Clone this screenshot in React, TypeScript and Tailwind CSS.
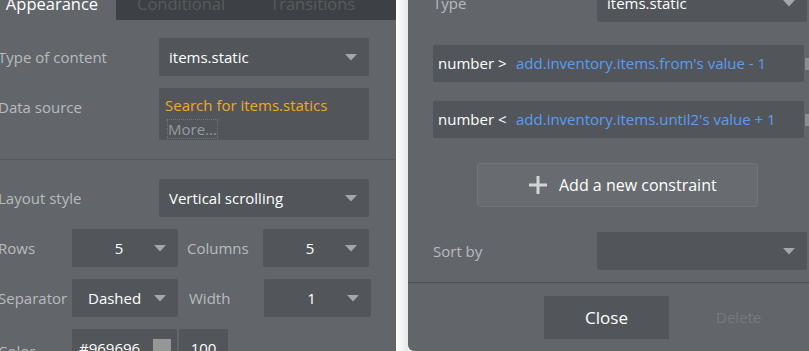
import React from 'react'

const Chevron = () => (
    <svg width="12" height="7" viewBox="0 0 12 7" className="shrink-0">
        <path d="M0 0 L12 0 L6 6.5 Z" fill="#a3a7ab" />
    </svg>
)

const Select = ({
    value,
    className,
    center,
}: {
    value: string
    className: string
    center?: boolean
}) => (
    <div
        className={`h-[38px] shrink-0 bg-[#52565a] rounded-[2px] flex items-center pr-3 ${className}`}
    >
        <span
            className={`text-[15px] text-white ${center ? 'flex-1 text-center pl-3' : 'flex-1 pl-[10px]'}`}
        >
            {value}
        </span>
        <Chevron />
    </div>
)

const Label = ({ text, className }: { text: string; className: string }) => (
    <span className={`text-[15px] text-[#b8bbbe] shrink-0 ${className}`}>{text}</span>
)

const Constraint = ({ op, expr }: { op: string; expr: string }) => (
    <div className="flex items-center">
        <div className="h-[37px] w-[372px] bg-[#52565a] rounded-[2px] flex items-center pl-[5px]">
            <span className="text-[15px] text-white w-[78px]">{op}</span>
            <span className="text-[15px] text-[#5b9cf2] whitespace-nowrap">{expr}</span>
        </div>
        <div className="ml-[1px] w-[4px] h-[12px] bg-[#8a8e92]" />
    </div>
)

export default function App() {
    return (
        <div className="w-[809px] h-[351px] bg-white flex overflow-hidden font-['Open_Sans',sans-serif]">
            {/* left: element property editor */}
            <div className="w-[396px] h-full bg-[#62666a] flex flex-col shrink-0 overflow-hidden">
                <div className="h-[20px] flex shrink-0 overflow-hidden">
                    <div className="w-[116px] flex justify-center">
                        <span className="text-[16.5px] leading-[24px] text-white -mt-[8px] -ml-[12px]">
                            Appearance
                        </span>
                    </div>
                    <div className="flex-1 bg-[#3d4145] flex">
                        <span className="text-[16.5px] leading-[24px] text-[#575b5f] -mt-[8px] ml-[21px]">
                            Conditional
                        </span>
                        <span className="text-[16.5px] leading-[24px] text-[#575b5f] -mt-[8px] ml-[45px]">
                            Transitions
                        </span>
                    </div>
                </div>

                <div className="flex flex-col shrink-0 pt-[18px] -ml-[2px]">
                    <div className="flex items-center">
                        <Label text="Type of content" className="w-[161px]" />
                        <Select value="items.static" className="w-[210px]" />
                    </div>

                    <div className="flex mt-[12px]">
                        <Label text="Data source" className="w-[161px] pt-[8px]" />
                        <div className="w-[210px] h-[52px] bg-[#52565a] rounded-[2px] flex flex-col pl-[6px] pt-[8px]">
                            <span className="text-[15px] text-[#f5a623] leading-[19px]">
                                Search for items.statics
                            </span>
                            <span className="self-start mt-[4px] ml-[2px] text-[15px] text-[#979b9f] leading-[18px] border border-dotted border-[#74787c]">
                                More...
                            </span>
                        </div>
                    </div>

                    <div className="h-px bg-[#575b5f] mt-[19px] ml-[2px]" />

                    <div className="flex items-center mt-[19px]">
                        <Label text="Layout style" className="w-[161px]" />
                        <Select value="Vertical scrolling" className="w-[210px]" />
                    </div>

                    <div className="flex items-center mt-[12px]">
                        <Label text="Rows" className="w-[74px]" />
                        <Select value="5" center className="w-[106px]" />
                        <Label text="Columns" className="w-[85px] pl-[9px]" />
                        <Select value="5" center className="w-[106px]" />
                    </div>

                    <div className="flex items-center mt-[12px]">
                        <Label text="Separator" className="w-[74px]" />
                        <Select value="Dashed" className="w-[106px] pl-[6px]" />
                        <Label text="Width" className="w-[86px] pl-[11px]" />
                        <Select value="1" center className="w-[107px]" />
                    </div>

                    <div className="flex items-start mt-[12px]">
                        <Label text="Color" className="w-[74px] pt-[11px]" />
                        <div className="w-[105px] h-[38px] bg-[#52565a] rounded-[2px] flex items-center pl-[7px]">
                            <span className="text-[15px] text-white flex-1">#969696</span>
                            <div className="w-[18px] h-[18px] bg-[#969696] mr-[6px]" />
                        </div>
                        <div className="ml-[2px] w-[49px] h-[38px] bg-[#52565a] rounded-[2px] flex items-center justify-center">
                            <span className="text-[15px] text-white">100</span>
                        </div>
                    </div>
                </div>
            </div>

            {/* gap with panel shadow */}
            <div className="w-[12px] h-full bg-gradient-to-r from-white via-[#f4f4f4] to-[#e9e9e9] shrink-0" />

            {/* right: search constraints popup */}
            <div className="flex-1 h-full bg-[#62666a] rounded-bl-[6px] flex flex-col pl-[25px] overflow-hidden">
                <div className="flex items-center shrink-0 -mt-[16px]">
                    <Label text="Type" className="w-[164px]" />
                    <Select value="items.static" className="w-[210px]" />
                </div>

                <div className="flex flex-col shrink-0 gap-[19px] mt-[23px]">
                    <Constraint op="number >" expr="add.inventory.items.from's value - 1" />
                    <Constraint op="number <" expr="add.inventory.items.until2's value + 1" />
                </div>

                <div className="mt-[25px] ml-[44px] shrink-0 w-[281px] h-[44px] bg-[#686c70] border border-[#71757a] rounded-[3px] flex items-center pl-[51px]">
                    <svg width="18" height="18" viewBox="0 0 18 18" className="mr-[12px]">
                        <rect x="7.5" y="0" width="3" height="18" fill="#d2d4d6" />
                        <rect x="0" y="7.5" width="18" height="3" fill="#d2d4d6" />
                    </svg>
                    <span className="text-[16px] text-white">Add a new constraint</span>
                </div>

                <div className="flex items-center shrink-0 mt-[25px]">
                    <Label text="Sort by" className="w-[164px]" />
                    <Select value="" className="w-[210px]" />
                </div>

                <div className="h-px shrink-0 bg-[#4c5054] mt-[12px] -ml-[25px]" />

                <div className="flex items-center shrink-0 mt-[13px]">
                    <div className="ml-[111px] w-[125px] h-[43px] bg-[#52565a] flex items-center justify-center">
                        <span className="text-[17px] text-white">Close</span>
                    </div>
                    <span className="ml-[47px] text-[15px] text-[#767a7e]">Delete</span>
                </div>
            </div>
        </div>
    )
}
